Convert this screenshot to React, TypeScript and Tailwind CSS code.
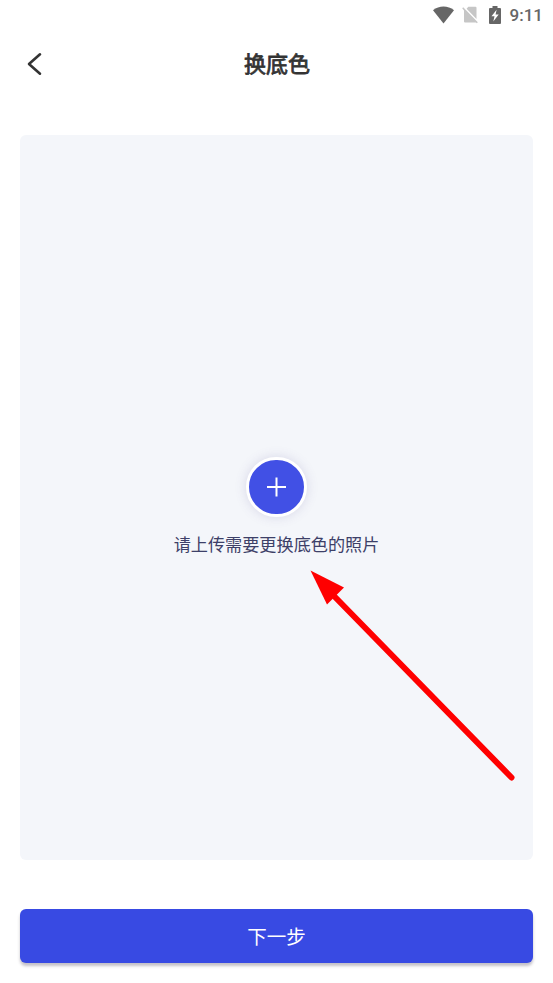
import { useState } from "react";

function StatusBar() {
  return (
    <div className="flex h-[30px] shrink-0 items-center justify-end pr-[10px] text-[#666666]">
      <svg width="22" height="18" viewBox="0 0 22 18" className="mr-[7px]">
        <path d="M0 4.200C6-.6 15-.6 21 4.200L10.500 17.400Z" fill="currentColor" />
      </svg>
      <svg width="17" height="18" viewBox="0 0 17 18" className="mr-[10px]">
        <path d="M6.300.8H13.500a1 1 0 0 1 1 1V13L4.600 2.800Z" fill="#c6c6c6" />
        <path d="M1.200 1.300 15.800 16.300 14.800 17.300 14 16.500H3a1 1 0 0 1-1-1V4.500L.2 2.300Z" fill="#c6c6c6" />
      </svg>
      <svg width="12" height="18" viewBox="0 0 12 18" className="mr-[9px]">
        <path d="M3.500 0h5v2H11a1 1 0 0 1 1 1v14a1 1 0 0 1-1 1H1a1 1 0 0 1-1-1V3a1 1 0 0 1 1-1h2.500Z" fill="currentColor" />
        <path d="M7.600 3.800 2.500 10.300h3l-1.200 5.200L9.700 8.600H6.600Z" fill="#ffffff" />
      </svg>
      <span className="font-[Roboto] text-[17px] leading-none font-medium">9:11</span>
    </div>
  );
}

function Header({ title }: { title: string }) {
  return (
    <div className="grid h-[68px] shrink-0 grid-cols-[70px_1fr_70px] items-center">
      <button aria-label="返回" className="pl-[27px]">
        <svg width="15" height="24" viewBox="0 0 15 24" fill="none" stroke="#333333" strokeWidth="2.600" strokeLinecap="round" strokeLinejoin="round">
          <path d="M13 2.300 2 12l11 9.700" />
        </svg>
      </button>
      <h1 className="pb-[4px] pl-px text-center text-[22px] leading-none font-normal text-[#333333] [-webkit-text-stroke:0.8px_#333333]">{title}</h1>
    </div>
  );
}

// Red pointer that leads to the upload hint
function PointerArrow() {
  return (
    <svg width="206" height="212" viewBox="0 0 206 212" className="pointer-events-none absolute top-[435px] left-[290px]">
      <path d="M25 27 201.500 207.500" stroke="#ff0000" strokeWidth="6" strokeLinecap="round" />
      <path d="M.5.5 34 17.500 17 34.500Z" fill="#ff0000" />
    </svg>
  );
}

export default function App() {
  const [pressed, setPressed] = useState(false);

  return (
    <div className="flex h-screen flex-col overflow-hidden bg-white font-['Noto_Sans_CJK_SC',sans-serif]">
      <StatusBar />
      <Header title="换底色" />

      <div className="relative mx-5 mt-[37px] flex h-[725px] shrink-0 flex-col items-center rounded-md bg-[#f4f6fa] pt-[322px]">
        <button
          aria-label="上传照片"
          className="flex h-[60px] w-[61px] items-center justify-center rounded-full border-[3px] border-white bg-[#4150e5] shadow-[0_0_12px_rgba(90,80,150,0.18)]"
        >
          <svg width="21" height="20" viewBox="0 0 21 20" stroke="#ffffff" strokeWidth="2">
            <path d="M10.500.5v19M1 10h19" />
          </svg>
        </button>
        <p className="mt-[17px] text-[17.150px] leading-[20px] text-[#3d4068]">请上传需要更换底色的照片</p>
        <PointerArrow />
      </div>

      <button
        onPointerDown={() => setPressed(true)}
        onPointerUp={() => setPressed(false)}
        className={`mx-5 mt-[49px] h-[54px] shrink-0 rounded-md text-[19.500px] leading-none text-white shadow-[0_3px_3px_rgba(60,50,70,0.3)] ${pressed ? "bg-[#2f3fcf]" : "bg-[#384ae3]"}`}
      >
        下一步
      </button>
    </div>
  );
}
